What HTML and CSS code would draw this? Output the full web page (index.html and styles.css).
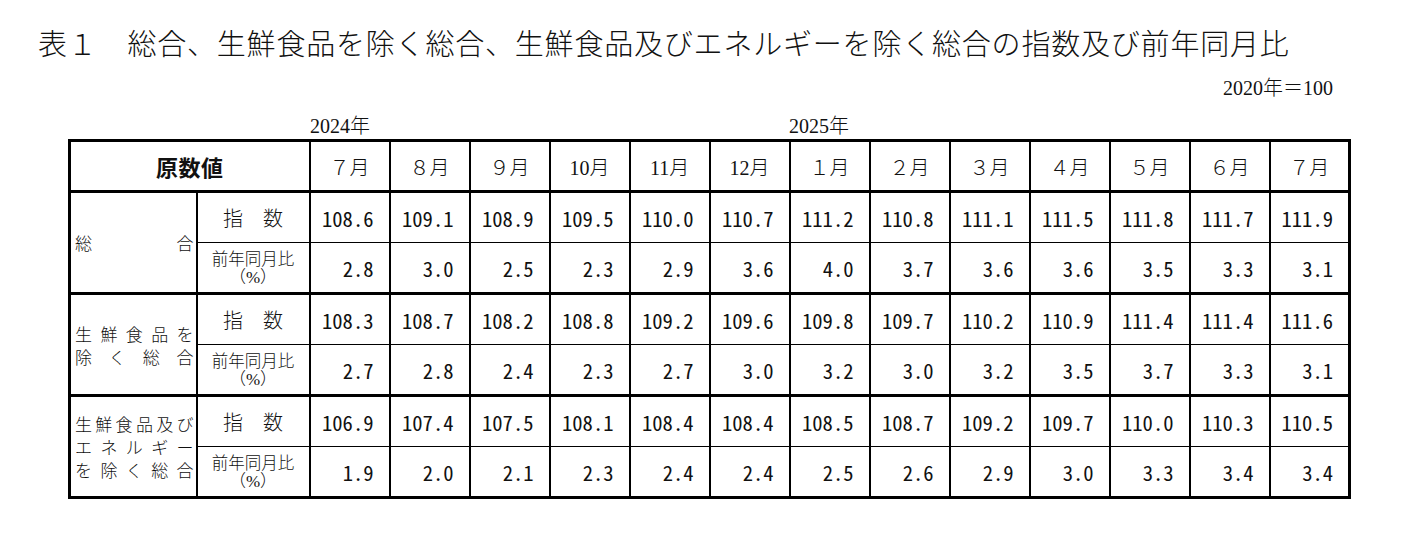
FILE: index.html
```html
<!DOCTYPE html>
<html lang="ja">
<head>
<meta charset="utf-8">
<title>表１</title>
<link rel="stylesheet" href="styles.css">
</head>
<body>
<div class="page">
  <h1 class="title">表１　総合、生鮮食品を除く総合、生鮮食品及びエネルギーを除く総合の指数及び前年同月比</h1>
  <div class="base">2020年＝100</div>
  <div class="years">
    <span class="y2024">2024年</span>
    <span class="y2025">2025年</span>
  </div>
  <table class="cpi">
    <colgroup>
      <col class="c-label"><col class="c-sub">
      <col class="c-m"><col class="c-m"><col class="c-m"><col class="c-m"><col class="c-m"><col class="c-m"><col class="c-m"><col class="c-m"><col class="c-m"><col class="c-m"><col class="c-m"><col class="c-m"><col class="c-m">
    </colgroup>
    <thead>
      <tr class="head">
        <th colspan="2" class="h-raw">原数値</th>
        <th>７月</th><th>８月</th><th>９月</th><th>10月</th><th>11月</th><th>12月</th><th>１月</th><th>２月</th><th>３月</th><th>４月</th><th>５月</th><th>６月</th><th>７月</th>
      </tr>
    </thead>
    <tbody>
      <tr class="idx">
        <td rowspan="2" class="label"><div class="line l-wide"><span>総</span><span>合</span></div></td>
        <td class="sub">指　数</td>
        <td class="num">108.6</td><td class="num">109.1</td><td class="num">108.9</td><td class="num">109.5</td><td class="num">110.0</td><td class="num">110.7</td><td class="num">111.2</td><td class="num">110.8</td><td class="num">111.1</td><td class="num">111.5</td><td class="num">111.8</td><td class="num">111.7</td><td class="num">111.9</td>
      </tr>
      <tr class="rate">
        <td class="sub sub2"><div class="s-line">前年同月比</div><div class="s-line pct">（%）</div></td>
        <td class="num">2.8</td><td class="num">3.0</td><td class="num">2.5</td><td class="num">2.3</td><td class="num">2.9</td><td class="num">3.6</td><td class="num">4.0</td><td class="num">3.7</td><td class="num">3.6</td><td class="num">3.6</td><td class="num">3.5</td><td class="num">3.3</td><td class="num">3.1</td>
      </tr>
      <tr class="idx">
        <td rowspan="2" class="label">
          <div class="line"><span>生</span><span>鮮</span><span>食</span><span>品</span><span>を</span></div>
          <div class="line"><span>除</span><span>く</span><span>総</span><span>合</span></div>
        </td>
        <td class="sub">指　数</td>
        <td class="num">108.3</td><td class="num">108.7</td><td class="num">108.2</td><td class="num">108.8</td><td class="num">109.2</td><td class="num">109.6</td><td class="num">109.8</td><td class="num">109.7</td><td class="num">110.2</td><td class="num">110.9</td><td class="num">111.4</td><td class="num">111.4</td><td class="num">111.6</td>
      </tr>
      <tr class="rate">
        <td class="sub sub2"><div class="s-line">前年同月比</div><div class="s-line pct">（%）</div></td>
        <td class="num">2.7</td><td class="num">2.8</td><td class="num">2.4</td><td class="num">2.3</td><td class="num">2.7</td><td class="num">3.0</td><td class="num">3.2</td><td class="num">3.0</td><td class="num">3.2</td><td class="num">3.5</td><td class="num">3.7</td><td class="num">3.3</td><td class="num">3.1</td>
      </tr>
      <tr class="idx">
        <td rowspan="2" class="label">
          <div class="line"><span>生</span><span>鮮</span><span>食</span><span>品</span><span>及</span><span>び</span></div>
          <div class="line"><span>エ</span><span>ネ</span><span>ル</span><span>ギ</span><span>ー</span></div>
          <div class="line"><span>を</span><span>除</span><span>く</span><span>総</span><span>合</span></div>
        </td>
        <td class="sub">指　数</td>
        <td class="num">106.9</td><td class="num">107.4</td><td class="num">107.5</td><td class="num">108.1</td><td class="num">108.4</td><td class="num">108.4</td><td class="num">108.5</td><td class="num">108.7</td><td class="num">109.2</td><td class="num">109.7</td><td class="num">110.0</td><td class="num">110.3</td><td class="num">110.5</td>
      </tr>
      <tr class="rate">
        <td class="sub sub2"><div class="s-line">前年同月比</div><div class="s-line pct">（%）</div></td>
        <td class="num">1.9</td><td class="num">2.0</td><td class="num">2.1</td><td class="num">2.3</td><td class="num">2.4</td><td class="num">2.4</td><td class="num">2.5</td><td class="num">2.6</td><td class="num">2.9</td><td class="num">3.0</td><td class="num">3.3</td><td class="num">3.4</td><td class="num">3.4</td>
      </tr>
    </tbody>
  </table>
</div>
</body>
</html>
```

FILE: styles.css
```css
html, body {
  margin: 0;
  padding: 0;
  background: #fff;
}

body {
  color: #111;
  font-family: "Liberation Serif", "Noto Sans CJK JP", serif;
  font-weight: 300;
}

.page {
  width: 1410px;
  height: 540px;
  padding-top: 27px;
  box-sizing: border-box;
}

.title {
  margin: 0 0 0 38px;
  font-family: "Noto Sans CJK JP", sans-serif;
  font-weight: 300;
  font-size: 29px;
  line-height: 30px;
  height: 30px;
  letter-spacing: 0.8px;
  white-space: nowrap;
}

.base {
  margin-top: 21px;
  padding-right: 77px;
  text-align: right;
  font-size: 20px;
  line-height: 20px;
  height: 20px;
}

.years {
  margin-top: 18px;
  display: grid;
  grid-template-columns: 310px 479px auto;
  font-size: 20px;
  line-height: 20px;
  height: 20px;
}

.y2024 { grid-column: 2; }
.y2025 { grid-column: 3; }

.cpi {
  margin: 3px 0 0 68px;
  border-collapse: collapse;
  table-layout: fixed;
  width: 1280px;
  border: 3px solid #000;
  font-family: "Noto Sans CJK JP", sans-serif;
  font-weight: 300;
}

.c-label { width: 127px; }
.c-sub { width: 113px; }
.c-m { width: 80px; }

.cpi tr { height: 51px; }

.cpi th,
.cpi td {
  border-left: 2px solid #000;
  border-right: 2px solid #000;
  border-top: 1px solid #000;
  border-bottom: 1px solid #000;
  padding: 0;
  box-sizing: border-box;
}

.head th {
  border-bottom: 3px solid #000;
  font-family: "Liberation Serif", "Noto Sans CJK JP", serif;
  font-weight: 300;
  font-size: 20px;
  text-align: center;
  vertical-align: middle;
}

.head th.h-raw {
  font-family: "Noto Sans CJK JP", sans-serif;
  font-weight: 700;
  font-size: 22px;
  letter-spacing: 0.5px;
}

.idx td { border-top: 3px solid #000; }

.label {
  vertical-align: middle;
  padding: 0 2px 0 4px !important;
  font-size: 17px;
  line-height: 23px;
}

.line {
  display: flex;
  justify-content: space-between;
}

.sub {
  text-align: center;
  vertical-align: middle;
  font-size: 20px;
  line-height: 22px;
}

.sub2 {
  font-size: 16.5px;
  padding-top: 1px !important;
}

.s-line {
  height: 19px;
  line-height: 19px;
}

.pct {
  font-family: "Liberation Serif", "Noto Sans CJK JP", serif;
  font-size: 17px;
}

.num {
  text-align: right;
  vertical-align: middle;
  padding-right: 15px !important;
  font-size: 20.6px;
  font-weight: 400;
  font-feature-settings: "hwid" 1;
  white-space: nowrap;
}
```
